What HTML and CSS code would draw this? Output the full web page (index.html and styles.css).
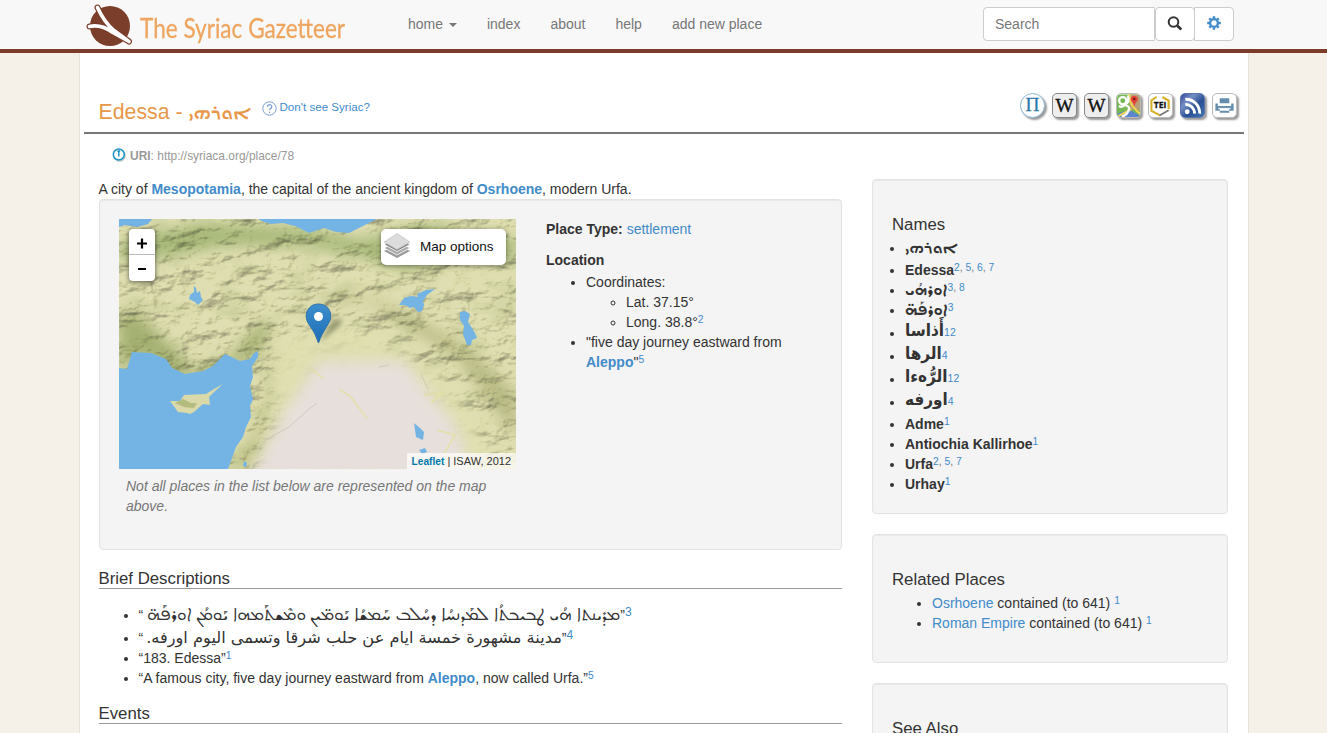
FILE: index.html
```html
<!DOCTYPE html>
<html lang="en">
<head>
<meta charset="utf-8">
<title>Edessa - The Syriac Gazetteer</title>
<link rel="stylesheet" href="styles.css">
</head>
<body>
<header class="navbar">
  <a class="brand">
    <svg class="brand-logo" width="48" height="44" viewBox="0 0 48 44"><circle cx="26" cy="23" r="20" fill="#7a3e2b"/><path d="M13.500 4.500Q20 19 30 27.500L45 38.500M5.500 23.500Q17 21 28 29L45 38.500" fill="none" stroke="#7a3e2b" stroke-width="6" stroke-linecap="round"/><path d="M13.500 4.500Q20 19 30 27.500L45 38.500M5.500 23.500Q17 21 28 29L45 38.500" fill="none" stroke="#fff" stroke-width="3.600" stroke-linecap="round"/></svg>
    <span class="brand-name">The Syriac Gazetteer</span>
  </a>
  <nav class="menu"><a>home <i class="caret"></i></a><a>index</a><a>about</a><a>help</a><a>add new place</a></nav>
  <div class="search"><span class="field">Search</span><span class="btn"><svg width="16" height="16" viewBox="0 0 16 16" fill="none" stroke="#333"><circle cx="6.500" cy="6" r="4.800" stroke-width="2"/><path d="m10 9.500 4.300 4.100" stroke-width="2.700"/></svg></span><span class="btn cog"><svg width="14" height="16" viewBox="-7 -7 14 16" fill="none" stroke="#428bca"><circle r="3.900" stroke-width="2.400"/><path d="M0-4.500V-6.800M0 4.500V6.800M-4.500 0H-6.800M4.500 0H6.800M3.300-3.300 4.700-4.700M-3.300-3.300-4.700-4.700M3.300 3.300 4.700 4.700M-3.300 3.300-4.700 4.700" stroke-width="2.500"/></svg></span></div>
</header>

<div class="page">
  <div class="title-row">
    <h1>Edessa - <bdi class="syr syr-title" lang="syr">ܐܘܪܗܝ</bdi></h1>
    <a class="help"><svg width="15" height="15" viewBox="0 0 15 15"><circle cx="7.500" cy="7.500" r="6.700" fill="#fff" stroke="#7da3d6"/><path d="M5.300 5.800Q5.500 3.700 7.600 3.700T9.800 5.700Q9.800 6.900 8.500 7.600 7.600 8.200 7.600 9.300M7.600 10.700V12" fill="none" stroke="#7da3d6" stroke-width="1.200"/></svg>Don't see Syriac?</a>
    <div class="tools">
      <span class="tool round"><svg width="25" height="25" viewBox="0 0 25 25"><text x="12.500" y="19" text-anchor="middle" class="pi">Π</text></svg></span>
      <span class="tool wiki">W</span>
      <span class="tool wiki">W</span>
      <span class="tool"><svg width="24" height="24" viewBox="0 0 24 24"><rect width="24" height="24" rx="4" fill="#75b855"/><path d="M13 0H20Q24 0 24 4V17L13 15Z" fill="#b7a078"/><path d="M0 20 13 16 24 22Q23 24 20 24H4Q0 24 0 20Z" fill="#5b86cb"/><path d="M13-1Q13 8 17 13T24 20M-1 24 15 15" fill="none" stroke="#f4d651" stroke-width="2"/><path d="M11 1Q14 7 8 11M8 11Q14 12 12 17T5 23M2 12Q5 14 8 11" fill="none" stroke="#fff" stroke-width="2.400"/><circle cx="6" cy="6.500" r="3.800" fill="none" stroke="#fff" stroke-width="2.400"/><path d="M18 13Q17 8 14.500 6.500A3.800 3.800 0 1 1 21.500 6.500Q19 8 18 13" fill="#e74438"/><circle cx="18" cy="4.800" r="1.400" fill="#761b1b"/></svg></span>
      <span class="tool"><svg width="24" height="24" viewBox="0 0 24 24"><path d="M8 2.500 2.500 6V17L12 22" fill="none" stroke="#d8b32f" stroke-width="2.200"/><path d="M11 22 20.500 16.500" stroke="#777" stroke-width="1.800"/><path d="M14 2.500 20.500 6.500V15" fill="none" stroke="#d8b32f" stroke-width="2.400"/><text x="11.500" y="14.500" text-anchor="middle" class="tei">TEI</text></svg></span>
      <span class="tool rss"><svg width="24" height="24" viewBox="0 0 24 24" fill="none" stroke="#fff" stroke-width="3"><circle cx="6.500" cy="18" r="2.500" fill="#fff" stroke="none"/><path d="M4.500 10.500A9 9 0 0 1 14 20M4.500 5A14.500 14.500 0 0 1 19.500 20"/></svg></span>
      <span class="tool print"><svg width="24" height="24" viewBox="0 0 24 24"><path d="M7 4H17V9H7ZM2.500 9.500H5V12H19V9.500H21.500V17H2.500ZM7 15V19H17V15Z" fill="#658dad"/><path d="M5.500 14.500H18.500" stroke="#fff"/></svg></span>
    </div>
  </div>

  <div class="uri"><svg width="14" height="14" viewBox="0 0 14 14"><circle cx="7.600" cy="7.600" r="5.600" fill="#fff" stroke="#aaa"/><circle cx="6.800" cy="6.500" r="5.500" fill="#fff" stroke="#1c93c5" stroke-width="1.500"/><path d="M6.800 2.500V8.500M5.300 3H8.300" stroke="#1c93c5" stroke-width="1.500"/></svg><b>URI</b>: http://syriaca.org/place/78</div>

  <div class="columns">
    <main>
      <p class="lead">A city of <a><b>Mesopotamia</b></a>, the capital of the ancient kingdom of <a><b>Osrhoene</b></a>, modern Urfa.</p>
      <section class="well overview">
        <div class="map-column">
          <div class="map">
            <svg class="terrain" width="397" height="250" viewBox="0 0 397 250">
              <defs>
                <filter id="soft" x="-30%" y="-30%" width="160%" height="160%"><feGaussianBlur stdDeviation="7"/></filter>
                <filter id="relief" x="0" y="0" width="100%" height="100%" color-interpolation-filters="sRGB"><feTurbulence type="fractalNoise" baseFrequency=".03 .05" numOctaves="5" seed="8"/><feColorMatrix values="0 0 0 0 0 0 0 0 0 0 0 0 0 0 0 1 0 0 0 0"/><feDiffuseLighting surfaceScale="5" diffuseConstant="1.240" lighting-color="#fffff2"><feDistantLight azimuth="225" elevation="55"/></feDiffuseLighting></filter>
                <filter id="green" x="0" y="0" width="100%" height="100%"><feTurbulence type="fractalNoise" baseFrequency=".03 .05" numOctaves="5" seed="17"/><feColorMatrix values="0 0 0 0 .38  0 0 0 0 .46  0 0 0 0 .18  3 0 0 0 -1.500"/></filter>
                <filter id="blur1"><feGaussianBlur stdDeviation="2.500"/></filter>
                <linearGradient id="pin" x2="0" y2="1"><stop stop-color="#3d8fce"/><stop offset="1" stop-color="#1b6cb4"/></linearGradient>
              </defs>
              <rect width="397" height="250" fill="#dfdeb2"/>
              <g filter="url(#soft)">
                <path d="M0 25 45 10 100 5 180 8 240 20 300 8 397 20V45L340 38 290 52 230 35 170 25 100 28 40 40 0 40Z" fill="#a9ba7c"/>
                <path d="M0 95 20 95 50 125 75 150 110 140 140 105 155 100 138 135 100 155 55 158 25 135 0 155Z" fill="#a4b072"/>
                <path d="M190 85 245 80 300 115 335 135 370 180 397 220V175L350 130 290 95 230 72Z" fill="#b8ba84"/>
                <path d="M148 110 158 150 130 220 110 250H135L155 170Z" fill="#c2c58c"/>
              </g>
              <rect width="397" height="250" filter="url(#green)" opacity=".3"/>
              <rect class="relief" width="397" height="250" filter="url(#relief)" opacity=".6"/>
              <g filter="url(#soft)">
                <path d="M160 120 220 105 280 130 325 160 357 205 380 250H135L155 200Z" fill="#e1dfb0" opacity=".85"/>
                <path d="M200 143 285 143 310 175 335 205 355 260H130L165 195Z" fill="#e7dfdb"/>
                <path d="M195 150 270 148 300 185 325 210 340 250H155L175 200Z" fill="#e7dfdb"/>
              </g>
              <path d="M192 150 205 160M220 170 232 178 248 200M318 211 336 216 325 235M305 176 324 174 312 184" fill="none" stroke="#e2df9f" stroke-width="2" opacity=".7"/><path d="M145 222 170 208 190 190 198 184M260 148 270 146M302 155 309 170" fill="none" stroke="#bbb1aa" opacity=".5"/>
              <g fill="#74b4e5">
                <path d="M0 0H33L29 5 18 8 6 6 0 8Z"/><path d="M139 0H258L246 6 230 14 217 13 205 9 190 14 176 7 164 4 152 5 145 3Z"/>
                <path d="M0 149 8 150 13 133 32 134 47 140 53 149 66 155 84 152 94 147 106 135 121 142 131 140 135 134 139 132 139 138 133 147 134 158 131 167 134 180 131 187 132 198 127 208 124 218 117 228 112 242 109 250H0Z"/>
                <path d="m75 67 2 2 1 5 3-2 1 6 2 3-5 5-3-3-6-3 1-4 4-3Z"/><path d="m280 86 5-7 7-2 7 1-1-3 9-4 9-1-8 6-4 6 1 4-2 6-4 1-4-5-4 1-5-3Z"/><path d="m341 93 5-1 5 3-2 8 6 9 3 7-5 2-1 5-4 0-4-11 1-8-4-6Z"/><path d="m295 204 6 5 4 4-1 8-7-3Z"/><path d="m300 231 6-2 2 4-5 2ZM125 242 128 244 127 248 124 247Z"/>
              </g>
              <path d="m51 182 10 0 4-6 22-1 8-5 9-5-10 9-4 4 1 8-7-1-9 8-4 2-3-1-9-1Z" fill="#dad9aa"/><path d="m56 184 8-4 8 4 6 0-3 5-10-1Z" fill="#b3bc7e"/>
              <path d="M200 124 213 103Q228 95 220 107Z" fill="#5e6340" opacity=".6" filter="url(#blur1)"/>
              <path d="M199.500 124Q197 115 189.500 104.500C184 96 189 85 199.500 85S215 96 209.500 104.500Q202 116 199.500 124Z" fill="url(#pin)" stroke="#2c70a9"/><circle cx="199.500" cy="97.500" r="4.500" fill="#fff"/>
            </svg>
            <div class="zoom"><svg width="26" height="52" viewBox="0 0 26 52"><path d="M0 25.500H26" stroke="#bbb"/><path d="M8 14.500H18M13 9.500V19.500M9 40H17" stroke="#000" stroke-width="2.200"/></svg></div>
            <div class="layers"><svg width="28" height="27" viewBox="0 0 28 27"><path d="m1 18 13 7 13-7-13-7Z" fill="#999"/><path d="m1 15 13 7 13-7-13-7Z" fill="#aaa" stroke="#fff" stroke-width=".8"/><path d="m1 11.500 13 7 13-7-13-7Z" fill="#888" stroke="#fff" stroke-width=".8"/><path d="m1 9 13 7.500L27 9 14 .500Z" fill="#dcdcdc" stroke="#bbb" stroke-width=".6"/></svg>Map options</div>
            <div class="credit"><a>Leaflet</a> | ISAW, 2012</div>
          </div>
          <p class="map-note">Not all places in the list below are represented on the map above.</p>
        </div>
        <div class="facts">
          <p><b>Place Type:</b> <a>settlement</a></p>
          <h2>Location</h2>
          <ul><li>Coordinates:<ul><li>Lat. 37.15°</li><li>Long. 38.8°<sup>2</sup></li></ul></li><li>"five day journey eastward from <a><b>Aleppo</b></a>"<sup>5</sup></li></ul>
        </div>
      </section>
      <h3 class="heading">Brief Descriptions</h3>
      <ul class="descriptions">
        <li class="d-syr">“<bdi class="syr west syr-line" lang="syr">ܡܕܺܝܢܬܐ ܗܳܝ ܛܒܝܒܬܳܐ ܠܡܰܕܢܚܳܐ ܕܚܳܠܒ ܚܰܡܫܳܐ ܝܰܘܡ̈ܝܢ ܘܡܶܫܬܰܡܗܐ ܝܰܘܡܳܢ ܐܘܪܦܰܗ̈</bdi>”<sup>3</sup></li>
        <li class="d-ar">“<bdi class="ar ar-line" lang="ar" dir="rtl">مدينة مشهورة خمسة ايام عن حلب شرقا وتسمى اليوم اورفه.</bdi>”<sup>4</sup></li>
        <li>“183. Edessa”<sup>1</sup></li>
        <li>“A famous city, five day journey eastward from <a><b>Aleppo</b></a>, now called Urfa.”<sup>5</sup></li>
      </ul>
      <h3 class="heading events">Events</h3>
    </main>
    <aside>
      <section class="well names">
        <h3>Names</h3>
        <ul>
          <li class="n1"><bdi class="syr syr-name" lang="syr">ܐܘܪܗܝ</bdi></li>
          <li>Edessa<sup>2<i>,</i> 5<i>,</i> 6<i>,</i> 7</sup></li>
          <li><bdi class="syr west west-name" lang="syr">ܐܘܪܗܳܝ</bdi><sup>3<i>,</i> 8</sup></li>
          <li class="n1"><bdi class="syr west west-name" lang="syr">ܐܘܪܦܰܗ̈</bdi><sup>3</sup></li>
          <li class="na"><bdi class="ar" lang="ar">أَذاسا</bdi><sup>12</sup></li>
          <li class="na"><bdi class="ar" lang="ar">الرها</bdi><sup>4</sup></li>
          <li class="na"><bdi class="ar" lang="ar">الرُّهءا</bdi><sup>12</sup></li>
          <li class="na"><bdi class="ar" lang="ar">اورفه</bdi><sup>4</sup></li>
          <li>Adme<sup>1</sup></li>
          <li>Antiochia Kallirhoe<sup>1</sup></li>
          <li>Urfa<sup>2<i>,</i> 5<i>,</i> 7</sup></li>
          <li>Urhay<sup>1</sup></li>
        </ul>
      </section>
      <section class="well related">
        <h3>Related Places</h3>
        <ul><li><a>Osrhoene</a> contained (to 641) <sup>1</sup></li><li><a>Roman Empire</a> contained (to 641) <sup>1</sup></li></ul>
      </section>
      <section class="well see"><h3>See Also</h3></section>
    </aside>
  </div>
</div>
</body>
</html>
```

FILE: styles.css
```css
* { box-sizing: border-box; }
html, body { height: 733px; overflow: hidden; }
body { margin: 0; background: #f5f1e8; color: #333; font: 14px/20px "Liberation Sans", Arial, sans-serif; display: flex; flex-direction: column; }
a, sup { color: #428bca; }
ul { margin: 0; }
p, h1, h2, h3 { margin: 0; font-weight: normal; }
sup { font-size: 10.300px; line-height: 0; vertical-align: baseline; position: relative; top: -4px; }
sup i { color: #777; font-style: normal; }

.navbar { flex: none; height: 53px; display: flex; background: #f8f8f8; border-bottom: 4px solid #7b3c29; padding-left: 84px; }
.brand { display: flex; width: 309px; color: #eea55f; padding-top: 3px; }
.brand-logo { flex: none; }
.brand-name { font: 27px/44px Lato, sans-serif; white-space: nowrap; margin-left: 8px; padding-top: 3px; transform: scaleX(.836); transform-origin: left; -webkit-text-stroke: .3px #eea55f; }
.menu { display: flex; width: 590px; padding-top: 14px; }
.menu a { color: #777; padding: 0 15px; }
.caret { display: inline-block; border: 4px solid transparent; border-top-color: #777; border-bottom: 0; vertical-align: middle; margin-left: 2px; }
.search { display: flex; padding-top: 7px; }
.field { width: 172px; height: 34px; border: 1px solid #ccc; border-radius: 4px 0 0 4px; background: #fff; padding: 6px 11px; color: #777; }
.btn { width: 40px; height: 34px; border: 1px solid #ccc; border-radius: 4px; background: #fff; display: flex; align-items: center; justify-content: center; }
.cog { margin-left: -1px; border-radius: 0 4px 4px 0; }

.page { flex: 1; min-height: 0; overflow: hidden; width: 1170px; margin: 0 0 0 79px; background: #fff; border: solid #e7e3dc; border-width: 0 1px; padding: 0 4px; }
.title-row { height: 81px; border-bottom: 2px solid #777; padding-left: 14.500px; display: flex; }
h1 { color: #e8984a; font-size: 21.300px; line-height: 26px; padding-top: 46px; width: 163px; white-space: nowrap; }
.syr-title { font-size: 18px; font-weight: bold; }
.help { font-size: 11.600px; padding-top: 45px; display: flex; gap: 3px; line-height: 18px; }
.help svg { margin-top: 3px; }
.tools { margin: 40px 7px 0 auto; display: flex; gap: 7px; }
.tool { width: 25px; height: 25px; border: 1px solid #bbb; border-radius: 5px; background: #fff; box-shadow: 2px 2px 2px #999; display: flex; align-items: center; justify-content: center; overflow: hidden; }
.round { border-radius: 50%; border-color: #8db8d3; }
.pi { font: 21px "Liberation Serif", serif; fill: #2c78ad; stroke: #2c78ad; stroke-width: .3; }
.wiki { background: #eee; border-color: #888; font: 19px "Liberation Serif", serif; color: #111; -webkit-text-stroke: .4px #111; }
.tei { font: bold 9px "Open Sans", sans-serif; fill: #111; stroke: #111; stroke-width: .3; }
.rss { background: linear-gradient(135deg, #3945a2, #7590c3 30%, #294f95 60%, #4778ae); border-color: #5b75aa; }
.uri { height: 44px; display: flex; padding: 12px 0 0 28px; font-size: 11.960px; color: #999; white-space: pre; }
.uri svg { margin: 2px 4px 0 0; }

.columns { display: flex; padding-left: 14.500px; gap: 30px; }
main { width: 743.500px; flex: none; }
.lead { height: 21px; padding-top: 1px; }
.well { background: #f4f4f4; border: 1px solid #e3e3e3; border-radius: 4px; box-shadow: inset 0 1px 1px rgba(0,0,0,.05); }
.overview { height: 351px; padding: 19px 19.500px; display: flex; }
.map-column { width: 397px; }
.map { position: relative; width: 397px; height: 250px; overflow: hidden; }
.terrain { display: block; isolation: isolate; }
.relief { mix-blend-mode: multiply; }
.zoom { position: absolute; left: 10px; top: 10px; width: 26px; height: 52px; border-radius: 4px; background: #fff; box-shadow: 0 1px 5px rgba(0,0,0,.6); }
.zoom svg { display: block; }
.layers { position: absolute; left: 262px; top: 10px; width: 125px; height: 36px; background: #fff; border-radius: 5px; box-shadow: 0 1px 5px rgba(0,0,0,.4); display: flex; align-items: center; padding: 0 0 1px 2px; gap: 9px; color: #111; font-size: 13.500px; }
.credit { position: absolute; right: 0; bottom: 0; height: 16px; padding: 0 5px; background: rgba(255,255,255,.7); font-size: 11px; line-height: 16px; white-space: nowrap; }
.credit a { color: #0078a8; font-weight: bold; font-size: 10.200px; }
.map-note { font-style: italic; color: #777; padding: 7px 20px 0 7px; }
.facts { margin-left: 30px; width: 260px; }
.facts h2 { font-size: 14px; font-weight: bold; line-height: 20px; margin: 11px 0 2px; }
.heading { font-size: 16.800px; line-height: 22px; height: 21px; margin-top: 18px; border-bottom: 1px solid #999; }
.descriptions { padding: 15px 0 0 40px; }
.descriptions li { height: 20px; white-space: nowrap; }
.descriptions .d-syr { height: 23px; line-height: 23px; }
.descriptions .d-ar { height: 21px; line-height: 21px; }
.d-syr sup, .d-ar sup { font-size: 12px; }
.events { margin-top: 15px; }

.syr { font-family: "Noto Sans Syriac", "Noto Sans", sans-serif; }
.west { font-family: "Noto Sans Syriac Western", "Noto Sans Syriac", sans-serif; }
.syr-line { margin-left: 4px; font-size: 17.950px; line-height: 0; }
.ar { font-family: "DejaVu Sans Condensed", "DejaVu Sans", sans-serif; font-stretch: condensed; }
.ar-line { font-family: "DejaVu Sans", sans-serif; font-stretch: normal; font-size: 16.200px; margin-left: 3px; }
aside { width: 356px; flex: none; padding-top: 1px; }
aside .well { margin-bottom: 20px; padding: 0 19px; }
aside h3 { font-size: 16.800px; line-height: 20px; padding-top: 35px; }
.names { height: 335px; }
.names ul { padding-left: 13px; padding-top: 3px; font-weight: bold; }
.names li { height: 20px; }
.names sup { font-weight: normal; }
.names .n1 { height: 22px; }
.syr-name { font-size: 15.200px; }
.west-name { font-size: 15.600px; line-height: 0; }
.names .na { height: 23px; line-height: 23px; }
.names .na bdi { font-size: 17px; line-height: 0; position: relative; top: -2px; }
.names .na sup { font-size: 10.500px; top: -2px; }
.related { height: 129px; }
.related ul { padding-left: 40px; padding-top: 3px; }
.see { height: 129px; }
```
